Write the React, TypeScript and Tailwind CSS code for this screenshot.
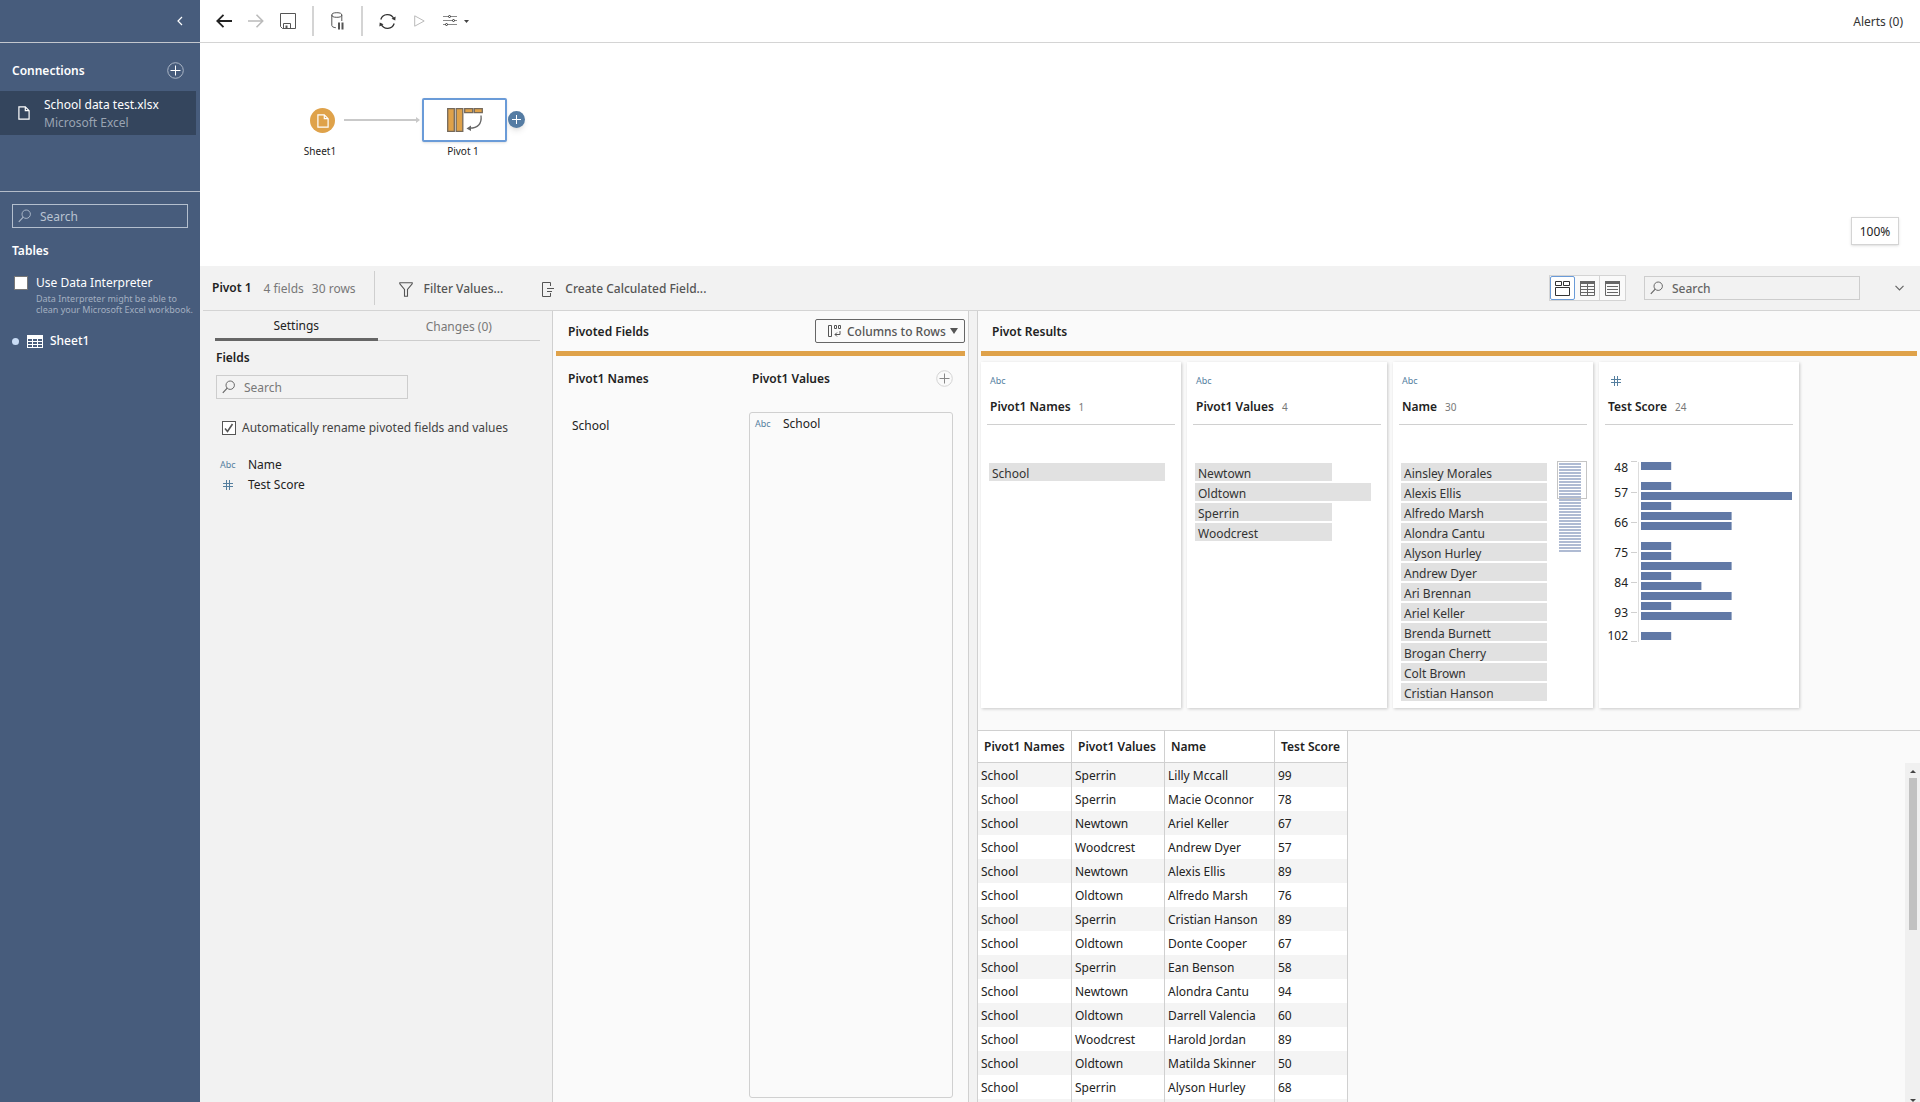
import type { ReactNode } from "react";
import clsx from "clsx";

interface PivotRow {
  school: string;
  name: string;
  score: number;
}

interface ValueBar {
  label: string;
  width: string;
}

const ROWS: PivotRow[] = [
  { school: "Sperrin", name: "Lilly Mccall", score: 99 },
  { school: "Sperrin", name: "Macie Oconnor", score: 78 },
  { school: "Newtown", name: "Ariel Keller", score: 67 },
  { school: "Woodcrest", name: "Andrew Dyer", score: 57 },
  { school: "Newtown", name: "Alexis Ellis", score: 89 },
  { school: "Oldtown", name: "Alfredo Marsh", score: 76 },
  { school: "Sperrin", name: "Cristian Hanson", score: 89 },
  { school: "Oldtown", name: "Donte Cooper", score: 67 },
  { school: "Sperrin", name: "Ean Benson", score: 58 },
  { school: "Newtown", name: "Alondra Cantu", score: 94 },
  { school: "Oldtown", name: "Darrell Valencia", score: 60 },
  { school: "Woodcrest", name: "Harold Jordan", score: 89 },
  { school: "Oldtown", name: "Matilda Skinner", score: 50 },
  { school: "Sperrin", name: "Alyson Hurley", score: 68 },
];

const NAME_BARS: ValueBar[] = [{ label: "School", width: "w-[176px]" }];

const VALUE_BARS: ValueBar[] = [
  { label: "Newtown", width: "w-[137px]" },
  { label: "Oldtown", width: "w-[176px]" },
  { label: "Sperrin", width: "w-[137px]" },
  { label: "Woodcrest", width: "w-[137px]" },
];

const PEOPLE_BARS: ValueBar[] = [
  "Ainsley Morales",
  "Alexis Ellis",
  "Alfredo Marsh",
  "Alondra Cantu",
  "Alyson Hurley",
  "Andrew Dyer",
  "Ari Brennan",
  "Ariel Keller",
  "Brenda Burnett",
  "Brogan Cherry",
  "Colt Brown",
  "Cristian Hanson",
].map((label) => ({ label, width: "w-[146px]" }));

// students per 3-point bin, starting at 48
const SCORE_BINS = [1, 0, 1, 5, 1, 3, 3, 0, 1, 1, 3, 1, 2, 3, 1, 3, 0, 1];

const AXIS = [
  { label: "48", text: 11, tick: 0 },
  { label: "57", text: 36, tick: 31 },
  { label: "66", text: 66, tick: 61 },
  { label: "75", text: 96, tick: 91 },
  { label: "84", text: 126, tick: 121 },
  { label: "93", text: 156, tick: 151 },
  { label: "102", text: 179, tick: 180 },
];

function SearchIcon() {
  return (
    <svg width="14" height="14" viewBox="0 0 14 14" fill="none" stroke="currentColor" className="shrink-0" aria-hidden="true">
      <circle cx="8.2" cy="5.2" r="4.2" />
      <path d="M5.2 8.2 0.8 12.8" strokeWidth="1.2" />
    </svg>
  );
}

function FileIcon({ className }: { className?: string }) {
  return (
    <svg width="12" height="14" viewBox="0 0 12 14" fill="none" stroke="currentColor" className={className} aria-hidden="true">
      <path d="M.9.9h6.4l3.8 3.8v8.4H.9z" strokeWidth="1.2" />
      <path d="M7.3.9v3.8h3.8" strokeWidth="1.2" />
    </svg>
  );
}

function NumberIcon() {
  return (
    <svg width="10" height="10" viewBox="0 0 10 10" fill="none" stroke="#557f9f" strokeWidth="1" aria-hidden="true">
      <path d="M3.5 0v10M6.5 0v10M0 3.5h10M0 6.5h10" />
    </svg>
  );
}

function IconButton({ label, className, children }: { label: string; className?: string; children: ReactNode }) {
  return (
    <button type="button" aria-label={label} className={clsx("flex shrink-0 items-center justify-center", className)}>
      {children}
    </button>
  );
}

function Sidebar() {
  return (
    <aside className="flex w-[200px] shrink-0 flex-col bg-[#475c7c] text-white">
      <div className="flex h-[43px] shrink-0 items-center justify-end border-b border-[#c3c7ce] pr-4">
        <IconButton label="Collapse" className="size-2">
          <svg width="6" height="10" viewBox="0 0 6 10" fill="none" stroke="currentColor" strokeWidth="1.2" aria-hidden="true">
            <path d="M5 1 1 5l4 4" />
          </svg>
        </IconButton>
      </div>

      <section className="h-[149px] shrink-0 border-b border-[#b4bcc9]">
        <div className="flex h-12 items-center justify-between px-3 pt-2">
          <h2 className="font-semibold">Connections</h2>
          <IconButton label="Add connection" className="mr-1 pb-[2px]">
            <svg width="17" height="17" viewBox="0 0 17 17" fill="none" aria-hidden="true">
              <circle cx="8.5" cy="8.5" r="7.8" stroke="#aab5c5" />
              <path d="M8.5 3.5v10M3.5 8.5h10" stroke="#fff" />
            </svg>
          </IconButton>
        </div>
        <button type="button" className="flex h-11 w-[196px] items-center bg-[#34455d] pl-[18px] text-left">
          <FileIcon />
          <span className="ml-[14px] flex flex-col pt-[2px] leading-[18px]">
            <span>School data test.xlsx</span>
            <span className="text-[#9aa4b2]">Microsoft Excel</span>
          </span>
        </button>
      </section>

      <section className="px-3 pt-3">
        <label className="flex h-6 items-center border border-[#b4bfce] px-[5px] text-[#a9b6c8]">
          <SearchIcon />
          <input type="text" aria-label="Search tables" placeholder="Search" className="ml-2 w-full min-w-0 bg-transparent pt-px outline-none placeholder:text-[#b9c3d1]" />
        </label>
        <h2 className="mt-[14px] font-semibold leading-[18px]">Tables</h2>
        <label className="mt-[14px] flex items-center gap-2 pl-[2px] leading-[18px]">
          <input type="checkbox" className="size-[14px] appearance-none border border-[#777] bg-white" />
          Use Data Interpreter
        </label>
        <p className="-mr-3 ml-6 mt-px text-[9px] leading-[11px] text-[#a3afc0]">
          Data Interpreter might be able to
          <br />
          clean your Microsoft Excel workbook.
        </p>
        <button type="button" className="mt-[17px] flex items-center font-medium leading-[18px]">
          <span className="size-[7px] rounded-full bg-[#c9dcf5]" />
          <svg width="16" height="13" viewBox="0 0 16 13" fill="none" className="ml-2 mr-[7px]" aria-hidden="true">
            <path d="M0 0h16v13H0z" fill="#fff" />
            <path d="M1 4h4v2H1zM6 4h4v2H6zM11 4h4v2h-4zM1 7h4v2H1zM6 7h4v2H6zM11 7h4v2h-4zM1 10h4v2H1zM6 10h4v2H6zM11 10h4v2h-4z" fill="#475c7c" />
          </svg>
          Sheet1
        </button>
      </section>
    </aside>
  );
}

function Toolbar() {
  return (
    <header className="flex h-[43px] shrink-0 items-center border-b border-[#d4d4d4] pl-4 pr-[17px] text-[#555]">
      <IconButton label="Undo" className="text-[#222]">
        <svg width="16" height="14" viewBox="0 0 16 14" fill="none" stroke="currentColor" strokeWidth="1.8" aria-hidden="true">
          <path d="M7.5.8 1.3 7l6.2 6.2M1.3 7H16" />
        </svg>
      </IconButton>
      <IconButton label="Redo" className="ml-4 text-[#bbb]">
        <svg width="16" height="14" viewBox="0 0 16 14" fill="none" stroke="currentColor" strokeWidth="1.6" aria-hidden="true">
          <path d="M8.5.8 14.7 7l-6.2 6.2M14.7 7H0" />
        </svg>
      </IconButton>
      <IconButton label="Save" className="ml-4">
        <svg width="16" height="16" viewBox="0 0 16 16" fill="none" stroke="currentColor" aria-hidden="true">
          <path d="M.5.5h15v15h-13l-2-2z" />
          <path d="M3.5 15v-4.5h7V15" />
          <path d="M5.500 12.500h2V15h-2z" fill="currentColor" stroke="none" />
        </svg>
      </IconButton>
      <div className="ml-4 h-[30px] w-[2px] bg-[#d4d4d4]" />
      <IconButton label="Pause data updates" className="ml-[17px]">
        <svg width="14" height="18" viewBox="0 0 14 18" fill="none" stroke="currentColor" aria-hidden="true">
          <ellipse cx="5.8" cy="3" rx="5" ry="2.3" />
          <path d="M.8 3v10.5c0 1 1.5 2 4 2.2M10.800 3v6" />
          <path d="M8 10.500v7M11.500 10.500v7" strokeWidth="2" />
        </svg>
      </IconButton>
      <div className="ml-4 h-[30px] w-[2px] bg-[#d4d4d4]" />
      <IconButton label="Refresh" className="ml-4 text-[#333]">
        <svg width="17" height="17" viewBox="0 0 17 17" fill="none" stroke="currentColor" strokeWidth="1.3" aria-hidden="true">
          <path d="M1.8 6.5a7 7 0 0 1 13-.8M15.200 10.500a7 7 0 0 1-13 .8" />
          <path d="m12.500 5.800 3.800 1.600.3-3.800zM4.500 11.200.7 9.600l-.3 3.800z" fill="currentColor" stroke="none" />
        </svg>
      </IconButton>
      <IconButton label="Run flow" className="ml-[18px] text-[#bbb]">
        <svg width="11" height="12" viewBox="0 0 11 12" fill="none" stroke="currentColor" aria-hidden="true">
          <path d="M.7.8v10.4L10.200 6z" />
        </svg>
      </IconButton>
      <IconButton label="Flow options" className="ml-[18px] gap-[7px]">
        <svg width="14" height="12" viewBox="0 0 14 12" fill="none" stroke="#888" aria-hidden="true">
          <path d="M0 1.500h14M0 5.500h14M0 9.500h14" />
          <circle cx="6.500" cy="1.500" r="1" fill="#fff" stroke="#333" />
          <circle cx="10.500" cy="5.500" r="1" fill="#fff" stroke="#333" />
          <circle cx="3.500" cy="9.500" r="1" fill="#fff" stroke="#333" />
        </svg>
        <svg width="5" height="3" viewBox="0 0 5 3" fill="#444" aria-hidden="true">
          <path d="M0 0h5L2.500 3z" />
        </svg>
      </IconButton>
      <button type="button" className="ml-auto pt-px text-[#333]">Alerts (0)</button>
    </header>
  );
}

function FlowCanvas() {
  return (
    <section className="relative h-[223px] shrink-0 text-[10px] text-[#222]">
      <button type="button" aria-label="Sheet1 input" className="absolute left-[110px] top-[65px] flex size-[25px] items-center justify-center rounded-full bg-[#dfa24a] text-white">
        <FileIcon />
      </button>
      <span className="absolute left-[90px] top-[100px] w-[60px] text-center leading-4">Sheet1</span>
      <svg width="77" height="8" viewBox="0 0 77 8" className="absolute left-36 top-[73px]" aria-hidden="true">
        <path d="M0 4h73" stroke="#c9c9c9" strokeWidth="2" />
        <path d="M72 1v6l4-3z" fill="#c9c9c9" />
      </svg>
      <button type="button" aria-label="Pivot 1 step" className="absolute left-[222px] top-[55px] flex h-11 w-[85px] items-center justify-center rounded-[2px] border-2 border-[#6a9bd8] bg-white shadow-sm">
        <svg width="36" height="24" viewBox="0 0 36 24" fill="none" aria-hidden="true">
          <path d="M.7.7h6.600v22.600H.7zM9.200.7h6.600v22.600H9.200zM17.700.7h8v4h-8zM27.300.7h8v4h-8z" fill="#dfa24a" stroke="#75695a" strokeWidth="1.3" />
          <path d="M34 7.500c1 8-3 13-12 12.700" stroke="#666" strokeWidth="1.3" />
          <path d="m19.500 20.500 4.500-3v5.500z" fill="#666" />
        </svg>
      </button>
      <button type="button" aria-label="Add step" className="absolute left-[308px] top-[68px] flex size-[17px] items-center justify-center rounded-full bg-[#557ca3] shadow-md">
        <svg width="9" height="9" viewBox="0 0 9 9" stroke="#fff" aria-hidden="true">
          <path d="M4.500 0v9M0 4.500h9" />
        </svg>
      </button>
      <span className="absolute left-[233px] top-[100px] w-[60px] text-center leading-4">Pivot 1</span>
      <button type="button" className="absolute bottom-[21px] right-[21px] h-7 w-12 border border-[#d4d4d4] bg-white pt-px text-[12px] shadow-sm">100%</button>
    </section>
  );
}

function StepBar() {
  return (
    <div className="ml-[3px] flex h-[45px] shrink-0 items-center border-b border-[#d4d4d4] pl-[9px] pr-4">
      <h1 className="font-semibold">Pivot 1</h1>
      <span className="ml-3 pt-[2px] text-[#787878]">4 fields</span>
      <span className="ml-2 pt-[2px] text-[#787878]">30 rows</span>
      <div className="ml-[18px] h-[34px] w-px bg-[#cfcfcf]" />
      <button type="button" className="ml-6 flex items-center gap-[11px] pt-[2px] font-medium text-[#555]">
        <svg width="14" height="15" viewBox="0 0 14 15" fill="none" stroke="currentColor" strokeWidth="1.1" aria-hidden="true">
          <path d="M.8.8h12.400v1L8.500 7.500v6.700h-3V7.500L.8 1.8z" />
        </svg>
        Filter Values...
      </button>
      <button type="button" className="ml-[38px] flex items-center gap-[11px] pt-[2px] font-medium text-[#555]">
        <svg width="13" height="15" viewBox="0 0 13 15" fill="none" stroke="currentColor" aria-hidden="true">
          <path d="M9.500 4V.5h-8v14h8V11M6 6.500h7M6 9.500h5" />
        </svg>
        Create Calculated Field...
      </button>

      <div className="ml-auto flex h-[26px] border border-[#d4d4d4] bg-[#fafafa]">
        <IconButton label="Profile view" className="w-[25px] rounded-[2px] border border-[#6a9bd8] bg-white">
          <svg width="15" height="15" viewBox="0 0 15 15" fill="none" stroke="#333" aria-hidden="true">
            <path d="M.5.5h6v4h-6zM8.500.5h6v4h-6zM.5 6.500h14v8H.5z" />
          </svg>
        </IconButton>
        <IconButton label="Data grid view" className="w-[25px] border-r border-[#d4d4d4]">
          <svg width="15" height="15" viewBox="0 0 15 15" fill="none" stroke="#666" aria-hidden="true">
            <path d="M0 0h15v3H0z" fill="#666" stroke="none" />
            <path d="M.5.5h14v14H.5zM0 5.500h15M0 8.500h15M0 11.500h15M7.500 3v12" />
          </svg>
        </IconButton>
        <IconButton label="List view" className="w-[25px]">
          <svg width="15" height="15" viewBox="0 0 15 15" fill="none" stroke="#666" aria-hidden="true">
            <path d="M0 0h15v3H0z" fill="#666" stroke="none" />
            <path d="M.5.5h14v14H.5zM2 5.500h11M2 8.500h11M2 11.500h11" />
          </svg>
        </IconButton>
      </div>
      <label className="ml-[18px] flex h-6 w-[216px] items-center border border-[#cdcdcd] px-[5px] text-[#666]">
        <SearchIcon />
        <input type="text" aria-label="Search fields" placeholder="Search" className="ml-2 w-full min-w-0 bg-transparent pt-px font-medium outline-none placeholder:text-[#666]" />
      </label>
      <IconButton label="Collapse pane" className="ml-[35px] text-[#666]">
        <svg width="9" height="6" viewBox="0 0 9 6" fill="none" stroke="currentColor" strokeWidth="1.2" aria-hidden="true">
          <path d="m.5.8 4 4 4-4" />
        </svg>
      </IconButton>
    </div>
  );
}

function SettingsPane() {
  return (
    <section className="w-[352px] shrink-0 pl-[15px] pr-3">
      <div role="tablist" className="flex h-[30px] border-b border-[#cdcdcd]">
        <button type="button" role="tab" aria-selected="true" className="-mb-px w-1/2 border-b-[3px] border-[#666] pt-[2px] text-[#222]">
          Settings
        </button>
        <button type="button" role="tab" aria-selected="false" className="w-1/2 pt-[2px] text-[#787878]">
          Changes (0)
        </button>
      </div>
      <div className="pl-px">
        <h2 className="mt-2 font-semibold leading-[18px]">Fields</h2>
        <label className="mt-2 flex h-6 w-[192px] items-center border border-[#cdcdcd] px-[5px] text-[#666]">
          <SearchIcon />
          <input type="text" aria-label="Search settings" placeholder="Search" className="ml-2 w-full min-w-0 bg-transparent pt-px outline-none placeholder:text-[#787878]" />
        </label>
        <label className="mt-5 flex items-center gap-[6px] pl-[6px] leading-[18px] text-[#444]">
          <span className="relative flex size-[14px]">
            <input type="checkbox" defaultChecked className="size-[14px] appearance-none border border-[#555] bg-white" />
            <svg width="10" height="10" viewBox="0 0 10 10" fill="none" stroke="#555" strokeWidth="1.6" className="pointer-events-none absolute left-[2px] top-[2px]" aria-hidden="true">
              <path d="m1 5.500 2.500 3L8.500 1" />
            </svg>
          </span>
          Automatically rename pivoted fields and values
        </label>
        <ul className="mt-[18px] pl-1 leading-5">
          <li className="flex items-center">
            <span className="w-7 text-[9px] text-[#557f9f]">Abc</span>Name
          </li>
          <li className="flex items-center">
            <span className="w-7 pl-[3px]"><NumberIcon /></span>Test Score
          </li>
        </ul>
      </div>
    </section>
  );
}

function PivotedFields() {
  return (
    <section className="mr-2 flex w-[417px] shrink-0 flex-col border-x border-[#d0d0d0] bg-[#fafafa] px-[3px]">
      <div className="flex h-10 shrink-0 items-start justify-between pl-3 pt-2">
        <h2 className="pt-1 font-semibold leading-[18px]">Pivoted Fields</h2>
        <button type="button" className="flex h-6 w-[150px] shrink-0 items-center rounded-[2px] border border-[#666] pl-3 font-medium text-[#555]">
          <svg width="13" height="13" viewBox="0 0 13 13" fill="none" stroke="currentColor" aria-hidden="true">
            <path d="M.5.5h3v11h-3zM6.500.5h2v3h-2zM10.500.5h2v3h-2zM12 6v3.500H7M9 7.500l-2 2 2 2" />
          </svg>
          <span className="ml-[6px] whitespace-nowrap pt-px">Columns to Rows</span>
          <svg width="8" height="6" viewBox="0 0 8 6" fill="currentColor" className="ml-1" aria-hidden="true">
            <path d="M0 0h8L4 6z" />
          </svg>
        </button>
      </div>
      <div className="h-[5px] shrink-0 bg-[#dfa24a]" />
      <div className="grid min-h-0 flex-1 grid-cols-[181px_1fr] grid-rows-[56px_1fr] pl-3">
        <h3 className="pt-[14px] font-semibold leading-[18px]">Pivot1 Names</h3>
        <div className="flex items-start justify-between pl-[3px] pr-3 pt-[14px] leading-[18px]">
          <h3 className="font-semibold">Pivot1 Values</h3>
          <IconButton label="Add pivoted field">
            <svg width="17" height="17" viewBox="0 0 17 17" fill="none" aria-hidden="true">
              <circle cx="8.500" cy="8.500" r="7.8" stroke="#d4d4d4" />
              <path d="M8.500 3.500v10M3.500 8.500h10" stroke="#888" />
            </svg>
          </IconButton>
        </div>
        <span className="pl-1 pt-[5px] leading-[18px]">School</span>
        <div className="mb-1 mr-3 flex items-start rounded-[3px] border border-[#d0d0d0] pl-[5px] pt-[2px] leading-[18px]">
          <span className="w-7 text-[9px] text-[#557f9f]">Abc</span>School
        </div>
      </div>
    </section>
  );
}

function ProfileCard({ title, count, numeric, children }: { title: string; count: number; numeric?: boolean; children: ReactNode }) {
  return (
    <article className="flex h-[346px] w-[200px] shrink-0 flex-col bg-white px-[6px] shadow-[1px_1px_3px_rgba(0,0,0,0.2)]">
      <div className="h-[63px] border-b border-[#d0d0d0] px-[3px] pt-[11px]">
        <div className="flex h-4 items-center text-[9px] text-[#557f9f]">
          {numeric ? <span className="pl-[3px]"><NumberIcon /></span> : "Abc"}
        </div>
        <h3 className="mt-[9px] flex items-center font-semibold leading-[18px]">
          {title}
          <span className="ml-2 text-[10px] font-normal text-[#787878]">{count}</span>
        </h3>
      </div>
      <div className="flex pt-[38px]">{children}</div>
    </article>
  );
}

function ValueBars({ bars }: { bars: ValueBar[] }) {
  return (
    <ul className="flex flex-col gap-[2px] pl-[2px] text-[#333]">
      {bars.map((bar) => (
        <li key={bar.label} className={clsx("h-[18px] bg-[#e1e1e1] pl-[3px] pt-px leading-5", bar.width)}>
          {bar.label}
        </li>
      ))}
    </ul>
  );
}

function ScrollPreview() {
  return (
    <svg width="30" height="92" viewBox="0 0 30 92" className="-mt-[2px] ml-[10px]" aria-hidden="true">
      {Array.from({ length: 30 }, (_, i) => (
        <rect key={i} x="2" y={2 + i * 3} width="22" height="2" fill="#afbbd3" />
      ))}
      <rect x=".5" y=".5" width="29" height="37" fill="none" stroke="#c4c4c4" />
    </svg>
  );
}

function ScoreHistogram() {
  return (
    <svg width="188" height="196" viewBox="0 -8 188 196" className="-mt-[10px]" role="img" aria-label="Test Score distribution">
      <path d="M33.500 1v180" stroke="#ddd" />
      {AXIS.map((mark) => (
        <g key={mark.label}>
          <text x="23" y={mark.text} textAnchor="end" fontSize="12" fill="#222">{mark.label}</text>
          <rect x="26" y={mark.tick} width="6" height="1" fill="#d0d0d0" />
        </g>
      ))}
      {SCORE_BINS.map((n, i) => (
        <rect key={i} x="36" y={1 + i * 10} width={n * 30.2} height="8" fill="#6179a6" />
      ))}
    </svg>
  );
}

function ResultsTable() {
  const headCell = "border-b border-r border-[#d0d0d0] bg-white pl-[6px] text-left font-semibold";
  const cell = "border-r border-[#d0d0d0] pl-[3px] pt-px";
  return (
    <div className="flex min-h-0 flex-1 justify-between overflow-hidden border-t border-[#d0d0d0]">
      <table className="w-[370px] shrink-0 table-fixed border-separate border-spacing-0 self-start text-[#222]">
        <thead>
          <tr className="h-8">
            <th className={clsx(headCell, "w-[94px]")}>Pivot1 Names</th>
            <th className={clsx(headCell, "w-[93px]")}>Pivot1 Values</th>
            <th className={clsx(headCell, "w-[110px]")}>Name</th>
            <th className={clsx(headCell, "w-[73px]")}>Test Score</th>
          </tr>
        </thead>
        <tbody>
          {ROWS.map((row) => (
            <tr key={row.name} className="h-6 bg-white odd:bg-[#f4f4f4]">
              <td className={cell}>School</td>
              <td className={cell}>{row.school}</td>
              <td className={cell}>{row.name}</td>
              <td className={cell}>{row.score}</td>
            </tr>
          ))}
          <tr className="h-6 bg-[#f4f4f4]">
            <td className={cell} />
            <td className={cell} />
            <td className={cell} />
            <td className={cell} />
          </tr>
        </tbody>
      </table>
      <div className="mt-8 flex w-[15px] flex-col items-center bg-[#f0f0f0] pl-px pt-[7px]" aria-hidden="true">
        <svg width="6" height="3" viewBox="0 0 6 3" fill="#444"><path d="M0 3h6L3 0z" /></svg>
        <div className="mt-[5px] h-[152px] w-2 bg-[#c1c1c1]" />
        <svg width="6" height="3" viewBox="0 0 6 3" fill="#444" className="mt-auto"><path d="M0 0h6L3 3z" /></svg>
      </div>
    </div>
  );
}

function PivotResults() {
  return (
    <section className="flex min-w-0 flex-1 flex-col border-l border-[#d0d0d0] bg-[#fafafa]">
      <div className="mx-[3px] h-[45px] shrink-0 border-b-[5px] border-[#dfa24a] pl-[11px] pt-3">
        <h2 className="font-semibold leading-[18px]">Pivot Results</h2>
      </div>
      <div className="flex h-[374px] shrink-0 gap-[6px] overflow-hidden pl-[3px] pt-[6px]">
        <ProfileCard title="Pivot1 Names" count={1}><ValueBars bars={NAME_BARS} /></ProfileCard>
        <ProfileCard title="Pivot1 Values" count={4}><ValueBars bars={VALUE_BARS} /></ProfileCard>
        <ProfileCard title="Name" count={30}>
          <ValueBars bars={PEOPLE_BARS} />
          <ScrollPreview />
        </ProfileCard>
        <ProfileCard title="Test Score" count={24} numeric><ScoreHistogram /></ProfileCard>
      </div>
      <ResultsTable />
    </section>
  );
}

export default function App() {
  return (
    <div className="flex h-screen overflow-hidden bg-white font-['Noto_Sans',sans-serif] text-[12px] text-[#222]">
      <Sidebar />
      <div className="flex min-w-0 flex-1 flex-col">
        <Toolbar />
        <FlowCanvas />
        <main className="flex min-h-0 flex-1 flex-col bg-[#f2f2f2]">
          <StepBar />
          <div className="flex min-h-0 flex-1">
            <SettingsPane />
            <PivotedFields />
            <PivotResults />
          </div>
        </main>
      </div>
    </div>
  );
}
